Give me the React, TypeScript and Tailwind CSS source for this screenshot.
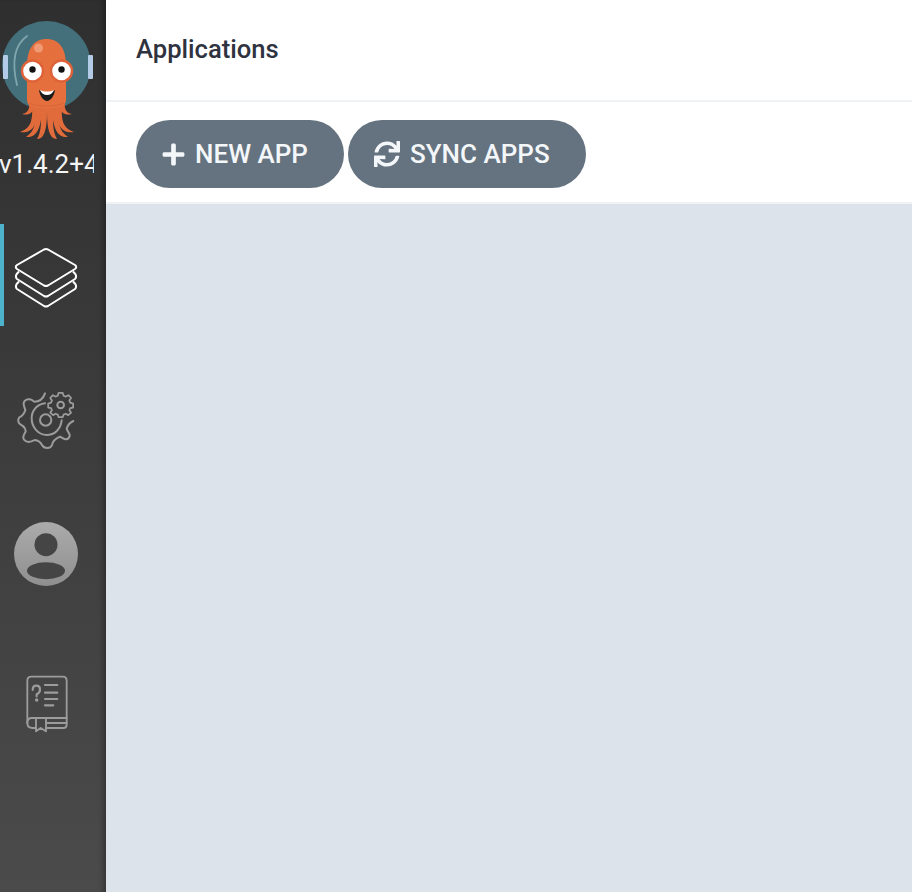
import { FaPlus, FaSync } from 'react-icons/fa';

function Tentacles() {
  return (
    <g fill="#e16b3a">
      <path d="M29 102 C30 109 28 113 22 114 C28 115.500 33 114 35 106 Z" />
      <path d="M32 104 C33 121 31 128 20 132 C29 133.500 37 129 38.500 110 Z" />
      <path d="M35.500 106 C36.500 122 35 131 26 137 C35 138 41 131 42 110 Z" />
      <path d="M40 106 C42 122 41 132 37 139 C44 139.500 47 130 47 112 L47 104 Z" />
    </g>
  );
}

function Logo() {
  return (
    <svg width="94" height="142" viewBox="0 0 94 142" className="block">
      <circle cx="46.500" cy="65.500" r="44.500" fill="#44707c" />
      <path d="M27 36 C16 44 11 60 17 85" fill="none" stroke="#7fa5ad" strokeWidth="1.800" strokeLinecap="round" />
      <rect x="3" y="55" width="5" height="24" rx="1" fill="#b3cbe6" />
      <rect x="88" y="55" width="5" height="24" rx="1" fill="#b3cbe6" />
      <Tentacles />
      <g transform="translate(94 0) scale(-1 1)">
        <Tentacles />
      </g>
      <path d="M27 66 C27 47 35 39 46.500 39 C58 39 66 47 66 66 L66 100 C66 106 60 109 46.500 109 C33 109 27 106 27 100 Z" fill="#e6703d" />
      <path d="M29 103 C36 107 57 107 64 103" fill="none" stroke="#d9643a" strokeWidth="1" />
      <circle cx="38.500" cy="48" r="4.500" fill="#ef9a74" />
      <circle cx="32.500" cy="71" r="10.500" fill="#fff" stroke="#df6138" strokeWidth="2.400" />
      <circle cx="61.500" cy="71" r="10.500" fill="#fff" stroke="#df6138" strokeWidth="2.400" />
      <circle cx="32.500" cy="69.500" r="3.200" fill="#111" />
      <circle cx="61.500" cy="69.500" r="3.200" fill="#111" />
      <path d="M39 90 C44 93 50 93 55 90 C54 97 50 101 47 101 C44 101 40 97 39 90 Z" fill="#1b1b1b" />
      <path d="M40 90 C44 92 50 92 54 90 C53 93 50 95 47 95 C44 95 41 93 40 90 Z" fill="#fff" />
    </svg>
  );
}

function LayersIcon() {
  return (
    <svg width="64" height="62" viewBox="0 0 64 62" fill="none" stroke="#fff" strokeWidth="2" strokeLinejoin="round">
      <path d="M30 2.500 Q32 1.500 34 2.500 L61 18 Q63.500 20 61 22 L34 38.500 Q32 39.500 30 38.500 L3 22 Q0.500 20 3 18 Z" />
      <path d="M5 24.500 L2.700 27 Q1 30 3 32 L30 49 Q32 50 34 49 L61 32 Q63 30 61.300 27 L59 24.500" />
      <path d="M5 34.500 L2.700 37 Q1 40 3 42 L30 59 Q32 60 34 59 L61 42 Q63 40 61.300 37 L59 34.500" />
    </svg>
  );
}

function SettingsIcon() {
  return (
    <svg width="72" height="68" viewBox="0 0 216 204" fill="none" stroke="#9c9c9c" strokeWidth="6" strokeLinecap="round" strokeLinejoin="round">
      <path d="M105 25 C100 40 88 50 72 50 C64 42 52 40 44 48 C36 56 44 66 46 75 C42 88 36 94 28 97 C22 104 24 116 34 120 C40 124 46 126 47 140 C42 148 36 156 42 164 C50 174 62 172 74 165 C84 166 92 172 96 180 C102 192 122 192 126 180 C128 170 138 160 150 155 C160 162 172 168 178 156 C184 146 170 140 170 130 C174 118 182 112 190 108" />
      <path d="M105 55 C80 58 65 78 65 100 C65 128 86 150 110 150 C134 150 152 132 155 106" />
      <circle cx="107" cy="105" r="17" />
      <path d="M145 24 L159 24 L162 34 L170 37 L179 32 L188 42 L182 50 L185 58 L195 61 L195 75 L185 77 L182 84 L188 92 L178 101 L170 96 L162 99 L159 108 L145 108 L142 99 L134 96 L126 101 L116 92 L122 84 L119 77 L109 75 L109 61 L119 58 L122 50 L116 42 L125 32 L134 37 L142 34 Z" transform="translate(152 60) scale(0.87) translate(-152 -66)" />
      <circle cx="152" cy="60" r="10" />
    </svg>
  );
}

function UserIcon() {
  return (
    <svg width="64" height="66" viewBox="0 0 64 66">
      <defs>
        <linearGradient id="avatar" x1="0" y1="0" x2="0" y2="1">
          <stop offset="0" stopColor="#ababab" />
          <stop offset="1" stopColor="#8f8f8f" />
        </linearGradient>
      </defs>
      <circle cx="32" cy="33" r="32" fill="url(#avatar)" />
      <circle cx="32" cy="23.700" r="11.500" fill="#454545" />
      <ellipse cx="32" cy="49.700" rx="19" ry="8.500" fill="#454545" />
    </svg>
  );
}

function HelpIcon() {
  return (
    <svg width="54" height="66" viewBox="0 0 162 198" fill="none" stroke="#9c9c9c" strokeWidth="5.500" strokeLinecap="round" strokeLinejoin="round">
      <path d="M22 160 L22 32 Q22 20 34 20 L128 20 Q140 20 140 32 L140 164 Q140 174 130 174 L78 174" />
      <path d="M140 144 L35 144 Q22 144 22 159 Q22 174 38 174 L48 174" />
      <path d="M48 144 L48 184 L62 174 L78 184 L78 144" />
      <path d="M78 159 L140 159" />
      <path d="M38 60 Q38 47 49 47 Q60 47 60 59 Q60 68 50 73 L50 79" strokeWidth="6.500" />
      <circle cx="50" cy="90" r="2.500" fill="#9c9c9c" />
      <path d="M75 45 L112 45 M75 68 L112 68 M75 87 L112 87 M75 106 L100 106" strokeWidth="6.500" />
    </svg>
  );
}

export default function App() {
  return (
    <div className="flex h-[892px] w-[912px] overflow-hidden font-['Roboto',sans-serif]">
      <aside className="z-10 h-full w-[106px] shrink-0 bg-gradient-to-b from-[#2f2f2f] to-[#4b4b4b] shadow-[inset_-6px_0_6px_-4px_rgba(0,0,0,0.35)]">
        <div className="h-[224px]">
          <Logo />
          <div className="w-[94px] overflow-hidden whitespace-nowrap text-[26px] leading-[44px] text-[#f4f4f4]">
            <span className="-ml-px">v1.4.2+4</span>
          </div>
        </div>
        <div className="flex h-[102px] w-[92px] items-center justify-center border-l-4 border-[#4db3cc] pr-1 pt-[6px]">
          <LayersIcon />
        </div>
        <div className="mt-[59px] flex w-[92px] justify-center">
          <SettingsIcon />
        </div>
        <div className="mt-[68px] flex w-[92px] justify-center">
          <UserIcon />
        </div>
        <div className="mt-[83px] flex w-[94px] justify-center">
          <HelpIcon />
        </div>
      </aside>
      <main className="flex min-w-0 flex-1 flex-col bg-[#dce3ea]">
        <header className="h-[102px] border-b-2 border-[#eff3f5] bg-white pl-[30px] pt-[32px]">
          <h1 className="text-[25.600px] font-medium leading-[34px] text-[#2f3340]">Applications</h1>
        </header>
        <div className="flex h-[102px] items-start gap-1 border-b-2 border-[#eff3f5] bg-white pl-[30px] pt-[18px]">
          <button className="flex h-[68px] w-[208px] items-center rounded-[34px] bg-[#65727f] pl-[25px] text-[26px] font-medium text-[#f4f7f9]">
            <FaPlus className="mr-[9px] size-[25px]" />
            NEW APP
          </button>
          <button className="flex h-[68px] w-[238px] items-center rounded-[34px] bg-[#65727f] pl-[26px] text-[26px] font-medium text-[#f4f7f9]">
            <FaSync className="mr-[10px] size-[26px]" />
            SYNC APPS
          </button>
        </div>
        <div className="flex-1" />
      </main>
    </div>
  );
}
